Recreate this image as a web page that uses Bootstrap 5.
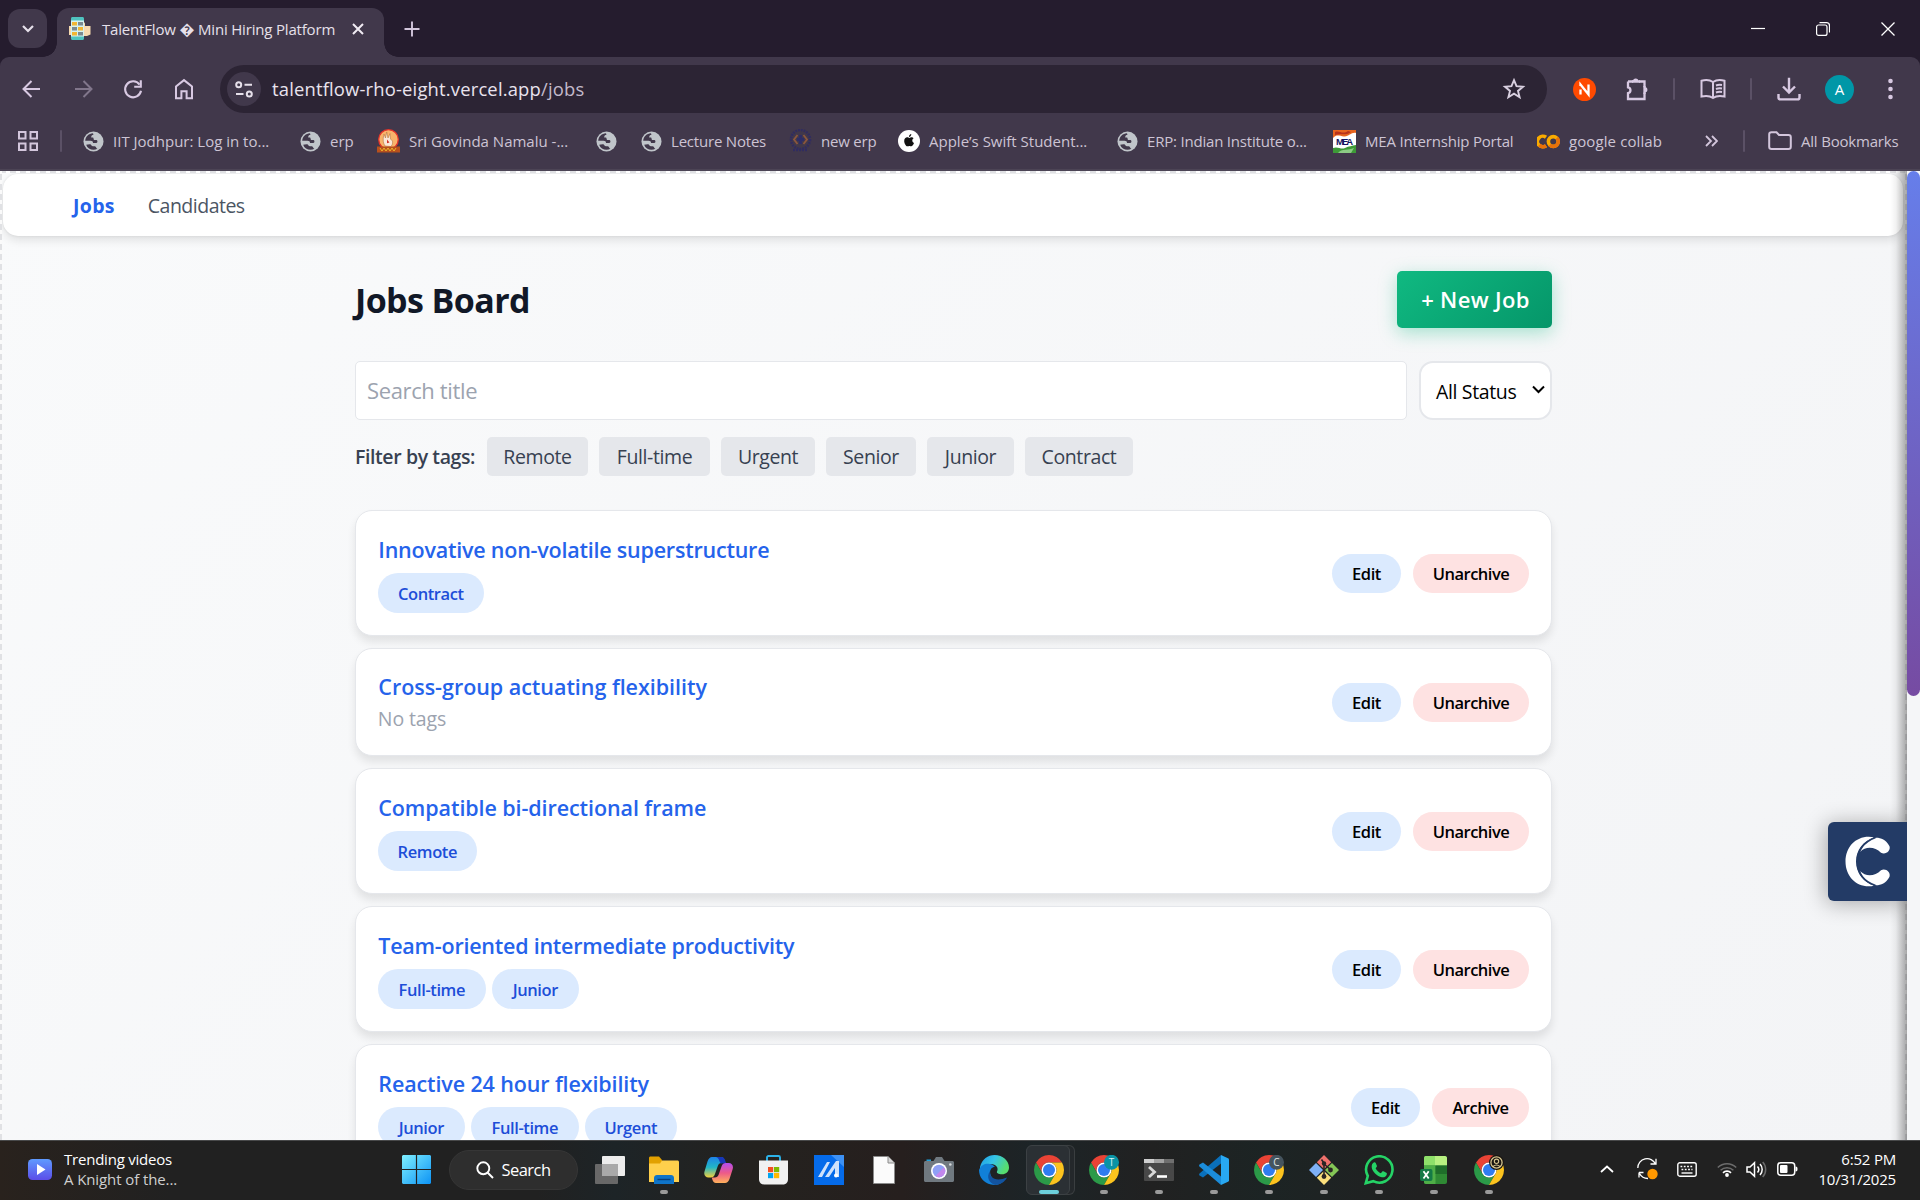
<!DOCTYPE html>
<html lang="en">
<head>
<meta charset="utf-8">
<title>TalentFlow - Mini Hiring Platform</title>
<link rel="stylesheet" href="https://cdn.jsdelivr.net/npm/bootstrap@5.3.0/dist/css/bootstrap.min.css">
<style>
body{width:1920px;height:1200px;overflow:hidden;font-family:"Open Sans","Noto Sans",sans-serif;font-size:15px;line-height:20px;background:#f4f5f7}
svg{display:block;flex:none}
.nw{white-space:nowrap}
/* browser chrome */
.tabstrip{height:57px;background:#251c2e;padding-left:8px}
.tabsearch{width:39px;height:39px;margin-top:9px;border-radius:12px;background:#41384b}
.tab-active{width:327px;height:49px;margin:8px 0 0 10px;border-radius:12px 12px 0 0;background:#41384b;padding:0 16px 8px 12px;color:#e6e0ea;letter-spacing:-.18px;position:relative}
.tab-active::before,.tab-active::after{content:"";position:absolute;bottom:0;width:14px;height:14px}
.tab-active::before{left:-14px;background:radial-gradient(circle at 0 0,transparent 13.5px,#41384b 14px)}
.tab-active::after{right:-14px;background:radial-gradient(circle at 100% 0,transparent 13.5px,#41384b 14px)}
.winbtns{gap:51px;padding-right:25px}
.toolbarwrap{background:#251c2e}
.browserbar{height:64px;background:#41384b;border-radius:9px 9px 0 0;padding:0 27px 0 20px}
.navicons{width:200px;gap:26.5px}
.omnibox{width:1327px;height:48px;border-radius:24px;background:#2c2434;padding:0 21px 0 7px;color:#e9e3ee;font-size:18.4px;letter-spacing:.18px}
.siteinfo{width:34px;height:34px;border-radius:50%;background:#41384b}
.vsep{width:2px;height:22px;background:#5b5166;border-radius:1px}
.avatar-a{width:29px;height:29px;border-radius:50%;background:#0097a7;color:#fff;font-size:15px}
.bookbar{height:50px;background:#41384b;border-bottom:2px solid #4c4455;color:#cdc4d4;padding:0 0 8px 18px;
 display:grid;grid-template-columns:42px 23px 217px 77px 219px 45px 148px 109px 219px 216px 204px 168px 38px 25px auto;align-items:center;letter-spacing:0}
.bookbar>a{display:flex;align-items:center;gap:9px;color:inherit;text-decoration:none;white-space:nowrap}
.bookbar>a.snug{letter-spacing:-.2px}
/* page */
.pageview{height:969px;position:relative;background:linear-gradient(135deg,#f9fafb,#f3f4f6)}
.dash-t,.dash-l,.dash-r{position:absolute;z-index:1}
.dash-t{left:0;top:0;width:1907px;height:2px;background:repeating-linear-gradient(90deg,#e0e1e4 0 6px,#fff 6px 10px)}
.dash-l{left:0;top:0;width:2px;height:969px;background:repeating-linear-gradient(0deg,#e0e1e4 0 6px,#fafafa 6px 10px)}
.dash-r{left:1905px;top:0;width:2px;height:969px;background:repeating-linear-gradient(0deg,#e0e1e4 0 6px,#f8f8f9 6px 10px)}
.edgeshade{position:absolute;z-index:2;right:13px;top:0;width:17px;height:969px;background:linear-gradient(90deg,rgba(0,0,0,0),rgba(0,0,0,.05) 35%,rgba(0,0,0,.33))}
.scrolltrack{position:absolute;z-index:3;right:0;top:0;width:13px;height:969px;background:#f5f6f8}
.scrollthumb{height:525px;border-radius:7px;background:linear-gradient(#667eea,#764ba2)}
.sitenav{margin:3px 17px 0 3px;height:62px;border-radius:15px;background:#fff;padding:2px 0 0 70px;gap:33px;font-size:19.5px;box-shadow:0 5px 8px rgba(0,0,0,.09),0 0 3px rgba(0,0,0,.1)}
.sitenav .lnk{text-decoration:none;color:#4b5563;letter-spacing:-.5px}
.sitenav .lnk.on{color:#2563eb;font-weight:700;letter-spacing:.3px}
.board{width:1197px;margin-left:355px;padding-top:35px}
.board h1{font-size:34px;font-weight:700;letter-spacing:-.6px;color:#111827;line-height:50px;margin:4px 0 0}
.newjob{width:155px;height:57px;border:0;border-radius:5px;color:#fff;font-weight:600;font-size:22px;letter-spacing:.35px;padding:0 0 2px 2px;background:linear-gradient(135deg,#10b981,#059669);box-shadow:0 5px 18px rgba(16,185,129,.35)}
.searchrow{margin-top:33px;gap:12px}
.searchrow .form-control{height:59px;width:1052px;flex:none;border:1px solid #e5e7eb;border-radius:5px;font-size:22px;letter-spacing:-.36px;padding:0 11px 2px}
.searchrow .form-control::placeholder{color:#9ca3af}
.statussel{width:133px;height:59px;border:2px solid #e5e7eb;border-radius:14px;background:#fff;color:#000;font-size:19.5px;letter-spacing:-.35px;padding:2px 5px 0 15px}
.filters{margin-top:17px;height:39px;gap:11px;color:#374151;font-size:19.5px;letter-spacing:-.4px}
.filters b{font-weight:600;width:121px}
.ftag{height:39px;border:0;border-radius:5px;background:#e5e7eb;color:#374151;padding:0;letter-spacing:-.4px}
.joblist{margin-top:34px;gap:12.5px}
.jobcard{height:125.5px;flex:none;border:1px solid #e5e7eb;border-radius:17px;background:#fff;padding:1px 22px 0 21.8px;box-shadow:0 6px 8px rgba(0,0,0,.09)}
.jobcard.notags{height:107.5px}
.jobtitle{position:relative;top:1px;left:.5px;font-size:21.5px;font-weight:600;color:#2563eb;line-height:30px;text-decoration:none;white-space:nowrap}
.nt{color:#9ca3af;font-size:19.5px;line-height:28px;letter-spacing:-.1px;margin-top:4px}
.tg{display:flex;gap:6px;margin-top:9px}
.tg span,.act{height:39.5px;border:0;border-radius:20px;font-size:16.5px;font-weight:600;letter-spacing:-.4px;display:flex;align-items:center;justify-content:center;background:#dbeafe;color:#1d4ed8;padding-top:2px;white-space:nowrap}
.act{color:#000;height:39px}
.act.arch{background:#fee2e2;letter-spacing:-.5px}
.w-remote{width:99px}.w-contract{width:106px}.w-full{width:108px}.w-junior{width:87px}.w-urgent{width:92px}
.cwidget{position:absolute;z-index:4;left:1828px;top:651px;width:79px;height:79px;border-radius:6px 0 0 6px;background:#233b66;box-shadow:-2px 2px 22px rgba(0,0,0,.32);clip-path:inset(-40px 0 -40px -40px)}
/* taskbar */
.taskbar{height:60px;position:relative;border-top:1px solid #48494a;padding-bottom:3px;background:linear-gradient(90deg,#29221d 0,#212121 9%,#212121 28%,#1d2427 32%,#24221f 39%,#261f1e 47%,#1c2427 54%,#212121 60%,#1c2424 66%,#212121 74%,#212121);color:#fff}
.tasklist{position:absolute;left:388px;top:-1px;height:59px}
.searchpill{width:129px;height:40px;border-radius:20px;background:#2e2e2e;border:1px solid #363636;margin:0 5px 0 33px;font-size:16.5px;letter-spacing:-.5px;gap:7px}
.app{width:55px;height:59px;position:relative;display:flex;align-items:center;justify-content:center}
.app.run::after{content:"";position:absolute;left:24px;top:50px;width:8px;height:4px;border-radius:2px;background:#9a9a9a}
.app.cur{z-index:1}
.app.cur::before{content:"";position:absolute;left:5px;top:5px;width:44px;height:50px;border-radius:6px;background:#2b3034;border:1px solid #3c4144;box-shadow:5px 0 0 -1px #24282b,5px 0 0 0 #3a3e40}
.app.cur::after{left:18px;width:20px;background:#6cd0dc}
.app svg{position:relative}
.clock{width:98px;text-align:right;letter-spacing:-.2px;margin-right:24px}
</style>
</head>
<body class="d-flex flex-column">
<svg width="0" height="0" class="position-absolute" aria-hidden="true"><defs>
<symbol id="globe" viewBox="0 0 22 22"><circle cx="11" cy="11" r="10.500" fill="#c0c5ca"/><path d="M10.500 2.400C6 2.700 2.700 5.800 2.300 10.200h5.500c1.900 0 2.700.9 2.700 2.300h3.400c.9 0 1.200-.6 1.200-1.500 0-1-.6-1.500-1.600-1.500h-1.300c-.9 0-1.100-.6-1.100-1.300 0-.9-.4-1.300-1.200-1.300H8.600c0-2.100.8-2.600 2.300-2.600z" fill="#41384b"/><path d="M3.300 14.300c1.200 3.400 4.200 5.400 7.700 5.400 1.500 0 2.900-.4 4.100-1.100-1.600-.3-1-2.300-2.700-2.500-1.300-.1-2.900.2-3.500-.9-.4-.8-1-1.300-2-1.300z" fill="#41384b"/></symbol>
<symbol id="chrome" viewBox="2 2 44 44"><path d="M24 13H43.050A22 22 0 0 0 4.950 13L14.470 29.500A11 11 0 0 1 24 13Z" fill="#ea4335"/><path d="M14.470 29.500 4.950 13A22 22 0 0 0 24 46L33.530 29.500A11 11 0 0 1 14.470 29.500Z" fill="#2b9a48"/><path d="M33.530 29.500 24 46A22 22 0 0 0 43.050 13H24A11 11 0 0 1 33.530 29.500Z" fill="#fcc31e"/><circle cx="24" cy="24" r="11" fill="#fff"/><circle cx="24" cy="24" r="8.800" fill="#2f7cf0"/></symbol>
</defs></svg>

<header class="tabstrip d-flex">
 <div class="tabsearch d-flex align-items-center justify-content-center"><svg width="14" height="10" viewBox="0 0 14 10"><path d="M2 2l5 5 5-5" fill="none" stroke="#e6e0ea" stroke-width="2.200"/></svg></div>
 <div class="tab-active d-flex align-items-center nw">
  <svg width="22" height="24" viewBox="0 0 22 24"><path d="M0 9h3v9H0zM14 8l2-3v4h5.500v8.500L18 19h-4z" fill="#f6d9ae"/><path d="M2 1.500C2 .6 2.600 0 3.500 0h10c.9 0 1.500.6 1.500 1.500v20c0 .9-.6 1.500-1.500 1.500h-10C2.600 23 2 22.400 2 21.500z" fill="#4fc3bf"/><path d="M2 3.500h13v16H2z" fill="#d6f1ef"/><path d="M3 5h5v3.500H3zM9 10h5v3.500H9zM3 15h5v3.500H3z" fill="#f2b632"/><path d="M9 5h5v3.500H9zM3 10h5v3.500H3zM9 15h5v3.500H9z" fill="#7b8a90"/></svg>
  <span class="ms-2 flex-grow-1" style="padding-left:3px">TalentFlow &#xFFFD; Mini Hiring Platform</span>
  <svg width="12" height="12" viewBox="0 0 12 12" class="me-1"><path d="M1 1l10 10M11 1L1 11" stroke="#f0ebf3" stroke-width="2"/></svg>
 </div>
 <div class="d-flex align-items-center ps-3 ms-1"><svg width="16" height="16" viewBox="0 0 16 16"><path d="M8 .5v15M.5 8h15" stroke="#d3c6dc" stroke-width="1.900"/></svg></div>
 <div class="winbtns ms-auto d-flex align-items-center">
  <svg width="14" height="14" viewBox="0 0 14 14"><path d="M0 6.500h14" stroke="#fff" stroke-width="1.200"/></svg>
  <svg width="14" height="14" viewBox="0 0 14 14" fill="none" stroke="#fff" stroke-width="1.200"><rect x=".6" y="3" width="10.400" height="10.400" rx="2"/><path d="M3.500.7H10.500a3 3 0 0 1 3 3v6.800"/></svg>
  <svg width="14" height="14" viewBox="0 0 14 14"><path d="M.5.5l13 13M13.500.5l-13 13" stroke="#fff" stroke-width="1.300"/></svg>
 </div>
</header>

<div class="toolbarwrap"><div class="browserbar d-flex align-items-center">
 <div class="navicons d-flex align-items-center">
  <svg width="24" height="24" viewBox="0 0 24 24" fill="none" stroke="#d8c9e2" stroke-width="2"><path d="M20 12H4M11.500 4 3.500 12l8 8"/></svg>
  <svg width="24" height="24" viewBox="0 0 24 24" fill="none" stroke="#81768b" stroke-width="2"><path d="M4 12h16M12.500 4l8 8-8 8"/></svg>
  <svg width="24" height="24" viewBox="0 0 24 24" fill="none" stroke="#d8c9e2" stroke-width="2.100"><path d="M18.600 7.600A8 8 0 1 0 20 13.800"/><path d="M19.800 3.300v6.500h-6.600"/></svg>
  <svg width="24" height="24" viewBox="0 0 24 24" fill="none" stroke="#d8c9e2" stroke-width="2"><path d="M4 21.300V9.400l8-6.300 8 6.300v11.900h-5.400v-7H9.400v7z"/></svg>
 </div>
 <div class="omnibox d-flex align-items-center nw">
  <div class="siteinfo d-flex align-items-center justify-content-center"><svg width="18" height="17" viewBox="0 0 18 17" fill="none" stroke="#e6e0ea" stroke-width="2"><circle cx="3.700" cy="3.700" r="2.500"/><path d="M9.500 3.700H17M1 13h7.500"/><circle cx="14.300" cy="13" r="2.500"/></svg></div>
  <span class="ms-2 flex-grow-1" style="padding-left:3px">talentflow-rho-eight.vercel.app<span style="color:#c3bacb">/jobs</span></span>
  <svg width="24" height="24" viewBox="0 0 24 24"><path d="M12 3.200l2.500 6 6.500.5-5 4.200 1.600 6.300-5.600-3.500-5.600 3.500L8 13.900 3 9.700l6.500-.5z" fill="none" stroke="#d8cfdf" stroke-width="1.900"/></svg>
 </div>
 <div class="d-flex align-items-center ms-auto">
  <svg width="23" height="23" viewBox="0 0 23 23"><circle cx="11.500" cy="11.500" r="11.500" fill="#ff4a00"/><path d="M7.500 16.500v-5M7.500 8V6.500l8 10v-10" fill="none" stroke="#fff" stroke-width="2.300"/></svg>
  <svg width="26" height="26" viewBox="0 0 26 26" style="margin:0 19px 0 28px" fill="none" stroke="#d8c9e2" stroke-width="2.300"><path d="M4 5.500h5.200M15 5.500h5.500v5.700M20.500 16.500V23H4v-5.800a3 3 0 0 0 0-5.900V5.500"/><path d="M9 5.300a2.700 2.700 0 0 1 5.400 0zM20.700 11a2.700 2.700 0 0 1 0 5.400z" fill="#d8c9e2" stroke="none"/><path d="M8 5.500h8M20.500 10v8"/></svg>
  <div class="vsep ms-1"></div>
  <svg width="26" height="22" viewBox="0 0 26 22" style="margin-left:25px" fill="none" stroke="#d8c9e2" stroke-width="2"><path d="M13 4c-3-2-8-2.200-11.500-1.200v15.700c3.500-.8 8.500-.7 11.500 1.500 3-2.200 8-2.300 11.500-1.500V2.800C21 1.800 16 2 13 4zM13 4v16M16 7.500c2-.8 4-.8 6-.5M16 11c2-.8 4-.8 6-.5M16 14.500c2-.8 4-.8 6-.5"/></svg>
  <div class="vsep ms-4"></div>
  <svg width="24" height="24" viewBox="0 0 24 24" style="margin-left:25px" fill="none" stroke="#d8c9e2" stroke-width="2.400"><path d="M12 .8v14M6 9.500l6 6 6-6M1.500 17v3.500c0 1 .8 1.900 1.900 1.900h17.200c1 0 1.900-.8 1.900-1.900V17"/></svg>
  <div class="avatar-a d-flex align-items-center justify-content-center ms-4">A</div>
  <svg width="5" height="22" viewBox="0 0 5 22" style="margin-left:34px" fill="#d8c9e2"><circle cx="2.500" cy="3" r="2.300"/><circle cx="2.500" cy="11" r="2.300"/><circle cx="2.500" cy="19" r="2.300"/></svg>
 </div>
</div></div>

<div class="bookbar">
 <svg width="20" height="20" viewBox="0 0 20 20" fill="none" stroke="#d3c6dc" stroke-width="2"><path d="M1 1h6.500v6.500H1zM12.500 1H19v6.500h-6.500zM1 12.500h6.500V19H1zM12.500 12.500H19V19h-6.500z"/></svg>
 <div class="vsep"></div>
 <a><svg width="21" height="21"><use href="#globe"/></svg>IIT Jodhpur: Log in to...</a>
 <a><svg width="21" height="21"><use href="#globe"/></svg>erp</a>
 <a><svg width="23" height="24" viewBox="0 0 23 24"><circle cx="11.500" cy="10.500" r="9.800" fill="#f9b36b" stroke="#e5332a" stroke-width="1.300"/><path d="M8 17c-2.500-4-2-8-1-12l1.500 4 1.200-6 1.300 6L13 4.500l.5 5.500 2 2c.5 3-.5 4.500-2 5.500z" fill="#fbe8d8" stroke="#b5763f" stroke-width=".6"/><path d="M10 10.500l2.500 3-2.500.8z" fill="#d1342b"/><path d="M0 17.500h23v6H0z" fill="#b8501d"/><path d="M3 19l2 3 2-3 2 3 2-3 2 3 2-3 2 3 2-3" fill="none" stroke="#efb52c" stroke-width="1"/></svg><span>Sri Govinda Namalu -...</span></a>
 <a><svg width="21" height="21"><use href="#globe"/></svg></a>
 <a class="snug"><svg width="21" height="21"><use href="#globe"/></svg>Lecture Notes</a>
 <a class="snug"><svg width="23" height="24" viewBox="0 0 23 24"><circle cx="11.500" cy="10.500" r="9.500" fill="none" stroke="#302c60" stroke-width="2.600" stroke-dasharray="1.800 1"/><path d="M11.500 6v9M8 10.500h7" stroke="#2e2d66" stroke-width="3"/><path d="M8.500 6L5 10.500 8.500 15M14.500 6l3.500 4.500-3.500 4.500" fill="none" stroke="#8c573c" stroke-width="1.800"/><path d="M4 21h15" stroke="#302c60" stroke-width="2.500" stroke-dasharray="2 1"/></svg>new erp</a>
 <a><svg width="22" height="22" viewBox="0 0 22 22"><circle cx="11" cy="11" r="11" fill="#fff"/><path d="M15.600 8.300c-.9.600-1.300 1.400-1.300 2.300 0 1.100.6 2 1.700 2.500-.6 1.800-1.700 3.200-2.800 3.200-.7 0-1-.4-1.800-.4s-1.200.4-1.900.4c-1.600 0-3.300-3-3.300-5.400 0-2.300 1.500-3.600 3-3.600.9 0 1.600.6 2.200.6.6 0 1.400-.6 2.400-.6.600 0 1.300.3 1.800 1zM13.300 4c.1 1.600-1 2.800-2.300 2.900-.1-1.500 1-2.700 2.300-2.900z" fill="#111"/></svg>Apple’s Swift Student...</a>
 <a class="snug"><svg width="21" height="21"><use href="#globe"/></svg>ERP: Indian Institute o...</a>
 <a class="snug"><svg width="23" height="23" viewBox="0 0 23 23"><path d="M0 0h23v23H0z" fill="#fff"/><path d="M0 0h23v3c-5-1-7 4-12 3.500C6 6 4 4 0 8z" fill="#e8651f"/><path d="M2 2c4-2 8 3 13-1l3 1C13 6 7 3 2 5z" fill="#b7321b"/><path d="M0 23v-5c5-2 8 2 12 0s7-2 11-3v8z" fill="#3d9a37"/><path d="M5 23c4-5 10-2 16-5l-3 5z" fill="#8ccb84"/><text x="11.500" y="15" font-size="9.500" font-weight="700" font-family="Liberation Sans" text-anchor="middle" textLength="17" fill="#14145e">MEA</text></svg>MEA Internship Portal</a>
 <a style="letter-spacing:.1px"><svg width="23" height="15" viewBox="0 0 23 15" fill="none" stroke-width="3.600"><path d="M9 3.300a5.300 5.300 0 1 0 0 8.400" stroke="#f9ab00"/><circle cx="16.300" cy="7.500" r="4.900" stroke="#f9ab00"/><path d="M19.800 4a4.900 4.900 0 0 1-7 7M2.300 11A5.300 5.300 0 0 0 9 11.700" stroke="#e8710a"/></svg>google collab</a>
 <svg width="13" height="12" viewBox="0 0 13 12"><path d="M1 1l5 5-5 5M7 1l5 5-5 5" fill="none" stroke="#d3c6dc" stroke-width="1.800"/></svg>
 <div class="vsep"></div>
 <a class="snug"><svg width="24" height="20" viewBox="0 0 24 20"><path d="M1.200 3.500c0-1.300 1-2.300 2.300-2.300h5l2.500 2.700h9.500c1.300 0 2.300 1 2.300 2.300v9.500c0 1.300-1 2.300-2.300 2.300h-17c-1.300 0-2.300-1-2.300-2.300z" fill="none" stroke="#d3c6dc" stroke-width="2"/></svg><span>All Bookmarks</span></a>
</div>

<main class="pageview flex-shrink-0 overflow-hidden">
 <div class="dash-t"></div><div class="dash-l"></div><div class="dash-r"></div><div class="edgeshade"></div>
 <div class="scrolltrack"><div class="scrollthumb"></div></div>
 <nav class="sitenav d-flex align-items-center"><a class="lnk on">Jobs</a><a class="lnk">Candidates</a></nav>
 <div class="board">
  <div class="d-flex justify-content-between align-items-start"><h1>Jobs Board</h1><button class="newjob">+ New Job</button></div>
  <div class="searchrow d-flex"><input class="form-control" placeholder="Search title">
   <div class="statussel d-flex align-items-center justify-content-between nw">All Status<svg width="13" height="9" viewBox="0 0 13 9" class="mb-1"><path d="M1 1.500l5.500 5.500L12 1.500" fill="none" stroke="#000" stroke-width="2"/></svg></div></div>
  <div class="filters d-flex align-items-center nw"><b>Filter by tags:</b><button class="ftag" style="width:101px">Remote</button><button class="ftag" style="width:111px">Full-time</button><button class="ftag" style="width:94px">Urgent</button><button class="ftag" style="width:90px">Senior</button><button class="ftag" style="width:87px">Junior</button><button class="ftag" style="width:108px">Contract</button></div>
  <div class="joblist d-flex flex-column">
   <article class="jobcard d-flex align-items-center justify-content-between"><div><a class="jobtitle" style="letter-spacing:-.22px">Innovative non-volatile superstructure</a><div class="tg"><span class="w-contract">Contract</span></div></div><div class="d-flex gap-2"><button class="act" style="width:69px">Edit</button><button class="act arch ms-1" style="width:116px">Unarchive</button></div></article>
   <article class="jobcard notags d-flex align-items-center justify-content-between"><div><a class="jobtitle" style="letter-spacing:-.03px">Cross-group actuating flexibility</a><div class="nt">No tags</div></div><div class="d-flex gap-2"><button class="act" style="width:69px">Edit</button><button class="act arch ms-1" style="width:116px">Unarchive</button></div></article>
   <article class="jobcard d-flex align-items-center justify-content-between"><div><a class="jobtitle" style="letter-spacing:-.09px">Compatible bi-directional frame</a><div class="tg"><span class="w-remote">Remote</span></div></div><div class="d-flex gap-2"><button class="act" style="width:69px">Edit</button><button class="act arch ms-1" style="width:116px">Unarchive</button></div></article>
   <article class="jobcard d-flex align-items-center justify-content-between"><div><a class="jobtitle" style="letter-spacing:-.24px">Team-oriented intermediate productivity</a><div class="tg"><span class="w-full">Full-time</span><span class="w-junior">Junior</span></div></div><div class="d-flex gap-2"><button class="act" style="width:69px">Edit</button><button class="act arch ms-1" style="width:116px">Unarchive</button></div></article>
   <article class="jobcard d-flex align-items-center justify-content-between"><div><a class="jobtitle" style="letter-spacing:-.12px">Reactive 24 hour flexibility</a><div class="tg"><span class="w-junior">Junior</span><span class="w-full">Full-time</span><span class="w-urgent">Urgent</span></div></div><div class="d-flex gap-2"><button class="act" style="width:69px">Edit</button><button class="act arch ms-1" style="width:97px">Archive</button></div></article>
  </div>
 </div>
 <div class="cwidget"><svg width="79" height="79" viewBox="0 0 79 79"><path d="M46 15.200C30 12 17.500 23.500 17.500 39.500S30 67 46 63.800C35.500 60 28 51 28 39.500S35.500 19 46 15.200z" fill="#fff"/><path d="M32 30C35 22 42 15 50 15.800c5 .8 9.500 4 11.500 8.500 1.500 4.500-4 9-8.500 6.500-6-6-15-7-21-.8zM32 49c3 8 10 15.000 18 14.200 5-.8 9.500-4 11.500-8.500 1.500-4.500-4-9-8.500-6.500-6 6-15 7-21 .8z" fill="#fff"/><path d="M47.500 15.500C36 20 29.500 28 29.500 39.500S36 59.500 47.500 63.500" fill="none" stroke="#233b66" stroke-width="1.700"/></svg></div>
</main>

<footer class="taskbar d-flex align-items-center flex-shrink-0">
 <svg width="25" height="22" viewBox="0 0 25 22" style="margin:1px 0 0 28px"><defs><linearGradient id="v" x2="0" y2="1"><stop stop-color="#5f9bff"/><stop offset="1" stop-color="#5b4de8"/></linearGradient></defs><rect width="24" height="21" rx="4.500" fill="url(#v)"/><path d="M9 5v11l8.500-5.500z" fill="#fff"/></svg>
 <div class="nw" style="margin-left:11px;letter-spacing:-.22px"><div>Trending videos</div><div style="color:#cfcfcf;letter-spacing:-.1px">A Knight of the...</div></div>
 <div class="tasklist d-flex align-items-center">
  <div class="app" style="width:27px;padding-left:28px"><svg width="29" height="29" viewBox="0 0 29 29"><defs><linearGradient id="w" x2="1" y2="1"><stop stop-color="#7ff0ff"/><stop offset="1" stop-color="#0d93f5"/></linearGradient></defs><path d="M1 0h12.900v13.900H0V1zM15.100 0H28l1 1v12.900H15.100zM0 15.100h13.900V29H1l-1-1zM15.100 15.100H29V28l-1 1H15.100z" fill="url(#w)"/></svg></div>
  <div class="searchpill d-flex align-items-center justify-content-center"><svg width="18" height="18" viewBox="0 0 18 18" fill="none" stroke="#fff" stroke-width="1.900"><circle cx="7.300" cy="7.300" r="6"/><path d="M11.500 11.500l5.500 5.500"/></svg>Search</div>
  <div class="app" style="width:53px"><svg width="30" height="28" viewBox="0 0 30 28"><rect x="7" width="23" height="20" rx="1" fill="#ececec"/><rect y="8" width="23" height="20" rx="1" fill="#686868"/><path d="M7 8h16v12H7z" fill="#a9a9a9"/></svg></div>
  <div class="app run"><svg width="30" height="28" viewBox="0 0 30 28"><path d="M0 2c0-1 .7-1.500 1.500-1.500H10L13 4v5H0z" fill="#e2a100"/><path d="M0 7.500h11l2-3h15.500c.8 0 1.500.7 1.500 1.500v20H0z" fill="#ffd04c"/><path d="M5 28v-6c0-1.700 1.300-3 3-3h14c1.700 0 3 1.300 3 3v6z" fill="#0f74c8"/><path d="M8.500 23.500h13" stroke="#053f7d" stroke-width="1.400"/></svg></div>
  <div class="app"><svg width="29" height="27" viewBox="0 0 29 27"><defs><linearGradient id="ca" x2="0" y2="1"><stop stop-color="#1e83e8"/><stop offset=".5" stop-color="#21b6c7"/><stop offset="1" stop-color="#f4d13a"/></linearGradient><linearGradient id="cb" x2="0" y2="1"><stop stop-color="#b44cf0"/><stop offset=".5" stop-color="#ed5a88"/><stop offset="1" stop-color="#ffb15b"/></linearGradient></defs><path d="M8 1h9c2 0 3 1.500 3.500 3l1 3h-4c-2 0-3 1-3.700 3l-3 8.500c-.7 2-2 3-4 3H4.500C1.500 21.500-.5 19 .5 15.500l3-10C4.500 2.500 6 1 8 1z" fill="url(#ca)"/><path d="M12 1h6c1.500 0 2.500 1.500 3 3l1 3-5 .5C15 6 15.500 2 12 1z" fill="#1737b8"/><path d="M21 27h-9c-2 0-3-1.500-3.500-3l-.8-2.500h3c2 0 3.300-1 4-3l3-8.500c.7-2 2-3 4-3h3c3 0 5 2.500 4 6l-3.200 10c-1 2.500-2.500 4-4.500 4z" fill="url(#cb)"/></svg></div>
  <div class="app"><svg width="29" height="30" viewBox="0 0 29 30"><path d="M8 7V2.500C8 1.700 8.700 1 9.500 1h10c.8 0 1.500.7 1.500 1.500V7" fill="none" stroke="#2cb3ea" stroke-width="1.900"/><path d="M0 5.500h29V24c0 3.300-2 5.500-5 5.500H5c-3 0-5-2.200-5-5.500z" fill="#f1f1f1"/><path d="M9 12h5.200v5.200H9z" fill="#f25022"/><path d="M15 12h5.200v5.200H15z" fill="#7fba00"/><path d="M9 18h5.200v5.200H9z" fill="#00a4ef"/><path d="M15 18h5.200v5.200H15z" fill="#ffb900"/></svg></div>
  <div class="app"><svg width="30" height="30" viewBox="0 0 30 30"><path d="M0 0h30v30H0z" fill="#056bea"/><path d="M30 0v12L17 0z" fill="#3d91f5"/><path d="M4 22L13 7h3L8 22zM11 22L22 6h3v16h-4v-9l-6 9z" fill="#cfe2fb"/><circle cx="22" cy="20.500" r="2" fill="#fff"/></svg></div>
  <div class="app"><svg width="22" height="28" viewBox="0 0 22 28"><path d="M.5.5H15L21.500 7v20.500H.5z" fill="#fbfbfb" stroke="#8b8b8b"/><path d="M15 .5V7h6.500" fill="#d9d9d9" stroke="#8b8b8b"/></svg></div>
  <div class="app"><svg width="30" height="26" viewBox="0 0 30 26"><path d="M2.500 2.500h4.500V6H2.500z" fill="#1da1dc"/><path d="M1.500 4h8L12 0h6l2.500 4h8c.8 0 1.500.7 1.500 1.500v18c0 .8-.7 1.500-1.500 1.500h-27C.7 25 0 24.300 0 23.500v-18C0 4.700.7 4 1.500 4z" fill="#707980"/><circle cx="15" cy="14" r="8" fill="#fff"/><circle cx="15" cy="14" r="6.300" fill="#8fa0f5"/><path d="M20 10.200a6.300 6.300 0 0 1-8.700 8.900z" fill="#c287ec"/><circle cx="26.300" cy="7.500" r="1.300" fill="#d5d8da"/></svg></div>
  <div class="app"><svg width="30" height="30" viewBox="0 0 30 30"><defs><linearGradient id="ea" x2="1" y2=".4"><stop stop-color="#1d9be8"/><stop offset=".5" stop-color="#35c4e6"/><stop offset="1" stop-color="#57dd6f"/></linearGradient></defs><path d="M1 12C3 4 9 0 15.500 0 24 0 30 6 30 12.500c0 4-3 6.800-7 6.800-3.800 0-5.700-1.400-5-2.700C20 13 17 9 12 9 7 9 3 12 1 16z" fill="url(#ea)"/><path d="M0 15C2 9.500 7 8 11 9c3 .7 4.500 2 4.800 3C11.500 12 10 17 12 21c2 4.500 7 6.500 13 5C21 30 16 30.500 12 29.500 4.500 28 0 22 0 15z" fill="#1180d8"/><path d="M11 16c-1 7 6 11 17 6.500C26 26.500 22 29.500 16 30 10 28 7 22 11 16z" fill="#12539f"/></svg></div>
  <div class="app run cur"><svg width="30" height="30"><use href="#chrome"/></svg></div>
  <div class="app run"><svg width="30" height="30"><use href="#chrome"/><circle cx="22.500" cy="7.300" r="7.500" fill="#0a93a5"/><text x="22.500" y="11" font-size="10" fill="#d6f2f5" text-anchor="middle">T</text></svg></div>
  <div class="app run"><svg width="30" height="22" viewBox="0 0 30 22"><rect width="30" height="22" rx="1" fill="#484848"/><path d="M0 0h10v4H0z" fill="#cfcfcf"/><path d="M10 0h10v4H10z" fill="#a3a3a3"/><path d="M20 0h10v4H20z" fill="#6f6f6f"/><path d="M5 8l5.500 5L5 18" fill="none" stroke="#d8d8d8" stroke-width="2.800"/><path d="M13 17.500h10" stroke="#fff" stroke-width="2.600"/></svg></div>
  <div class="app run"><svg width="30" height="30" viewBox="0 0 30 30"><path d="M22 0l7 3.300c.6.3 1 .8 1 1.500v20.400c0 .7-.4 1.200-1 1.500L22 30z" fill="#28a8f2"/><path d="M22 0v8.500L4 22.500l-3.500-2c-.6-.5-.6-1.400 0-2z" fill="#0a70bb"/><path d="M22 30v-8.500L4 7.500l-3.500 2c-.6.500-.6 1.400 0 2z" fill="#1b8ddb"/></svg></div>
  <div class="app run"><svg width="30" height="30"><use href="#chrome"/><circle cx="22.500" cy="7.300" r="7.500" fill="#45545e"/><text x="22.500" y="11" font-size="10" fill="#e2e6e8" text-anchor="middle">C</text></svg></div>
  <div class="app run"><svg width="30" height="30" viewBox="0 0 30 30"><path d="M15 0l7.200 7.200L15 14 7.800 7.200z" fill="#f0716c"/><path d="M7 8l7 7-7 7-7-7z" fill="#7fb0f5"/><path d="M23 8l7 7-7 7-7-7z" fill="#84c656"/><path d="M15 16l7.200 6.800L15 30l-7.200-7.200z" fill="#fbdf7c"/><path d="M12.500 4.500L15 8v13M15 9l6.500 5.500" fill="none" stroke="#2b2524" stroke-width="1.600"/><circle cx="15" cy="8.500" r="2.200" fill="#2b2524"/><circle cx="21.500" cy="15" r="2.400" fill="#2b2524"/><circle cx="15" cy="21.500" r="2.400" fill="#2b2524"/></svg></div>
  <div class="app run"><svg width="30" height="30" viewBox="0 0 30 30"><path d="M1.800 28.200l2-7.200A13.200 13.200 0 1 1 9.200 26.200z" fill="none" stroke="#25d366" stroke-width="2.600"/><path d="M10.200 7.300c.6-.2 1.200 0 1.500.6l1.200 2.800c.2.500 0 1-.3 1.300l-1 1.200c1.300 2.400 3 4 5.300 5l1.400-1.600c.3-.4.800-.5 1.200-.3l2.800 1.400c.5.300.7.700.6 1.200-.5 2.400-2.500 3.700-5 3.300-5-1-9.700-5.600-10.200-10-.2-2.400.8-4.300 2.500-4.900z" fill="#25d366"/></svg></div>
  <div class="app run"><svg width="27" height="28" viewBox="0 0 27 28"><rect x="4" y="0" width="23" height="28" rx="2" fill="#2f8a34"/><path d="M5.500 0H15v9.500H4V2c0-1 .5-2 1.500-2z" fill="#8fe06a"/><path d="M15 0h10c1.200 0 2 1 2 2v7.500H15z" fill="#b8f081"/><path d="M4 9.500h11.500V28H6c-1.200 0-2-.8-2-2z" fill="#4fae47"/><path d="M15.500 9.500H27V18H15.500z" fill="#1f6d2a"/><rect x="0" y="13" width="12.500" height="12" rx="2" fill="#157a46"/><path d="M3.500 15.300l5.200 7.200M8.700 15.300l-5.200 7.200" stroke="#fff" stroke-width="1.800"/></svg></div>
  <div class="app run"><svg width="30" height="30"><use href="#chrome"/><circle cx="22.500" cy="7.500" r="7.500" fill="#191510"/><circle cx="22.500" cy="7.500" r="5.600" fill="none" stroke="#d7c690" stroke-width="1.300"/><circle cx="22.500" cy="6.300" r="2.200" fill="none" stroke="#d7c690" stroke-width="1.100"/><path d="M19 11.500q3.500-3 7 0" fill="none" stroke="#d7c690" stroke-width="1.100"/></svg></div>
 </div>
 <div class="ms-auto d-flex align-items-center">
  <svg width="14" height="8" viewBox="0 0 14 8"><path d="M1 7l6-5.500L13 7" fill="none" stroke="#fff" stroke-width="1.800"/></svg>
  <svg width="21" height="22" viewBox="0 0 21 22" style="margin-left:23px" fill="none" stroke="#fff" stroke-width="1.300"><path d="M.8 10A9.300 9.300 0 0 1 18.500 6M19 .8V6h-5.500M2 14.500v5M2 14.500h4.500M2.500 15.500A9.500 9.500 0 0 0 11 20.500"/><circle cx="15.500" cy="16" r="5.200" fill="#ff9800" stroke="none"/></svg>
  <svg width="20" height="15" viewBox="0 0 20 15" style="margin-left:19px"><rect x=".8" y=".8" width="18.400" height="13.400" rx="2" fill="none" stroke="#fff" stroke-width="1.400"/><path d="M3.500 4.500h13M4.500 7.500h11" stroke="#fff" stroke-width="1.600" stroke-dasharray="1.800 1.500"/><path d="M4.500 11h11" stroke="#fff" stroke-width="1.400"/></svg>
  <svg width="20" height="16" viewBox="0 0 20 16" style="margin-left:20px" fill="none" stroke-width="1.500"><path d="M.8 6.500a13 13 0 0 1 18.400 0M3.600 9.300a9.200 9.200 0 0 1 12.800 0" stroke="#6c6c6c"/><path d="M6 11.800a5.600 5.600 0 0 1 8 0" stroke="#fff" stroke-width="1.700"/><circle cx="10" cy="14" r="1.900" fill="#fff"/></svg>
  <svg width="21" height="17" viewBox="0 0 21 17" style="margin-left:9px" fill="none" stroke="#fff" stroke-width="1.500"><path d="M1 6h3l4.500-4.300v13.600L4 11H1zM11.500 5.500a4.500 4.500 0 0 1 0 6M14 3a8 8 0 0 1 0 11"/><path d="M16.700 1a11 11 0 0 1 0 15" stroke="#6c6c6c"/></svg>
  <svg width="21" height="14" viewBox="0 0 21 14" style="margin-left:10px"><rect x=".8" y=".8" width="16.900" height="12.400" rx="3" fill="none" stroke="#fff" stroke-width="1.500"/><rect x="3" y="3" width="7.500" height="8" rx="1" fill="#fff"/><path d="M18.500 4.500c1.800 0 2 1 2 2.500s-.2 2.500-2 2.500z" fill="#fff"/></svg>
  <div class="clock"><div>6:52 PM</div><div>10/31/2025</div></div>
 </div>
</footer>
<script src="https://cdn.jsdelivr.net/npm/bootstrap@5.3.0/dist/js/bootstrap.bundle.min.js"></script>
</body>
</html>
